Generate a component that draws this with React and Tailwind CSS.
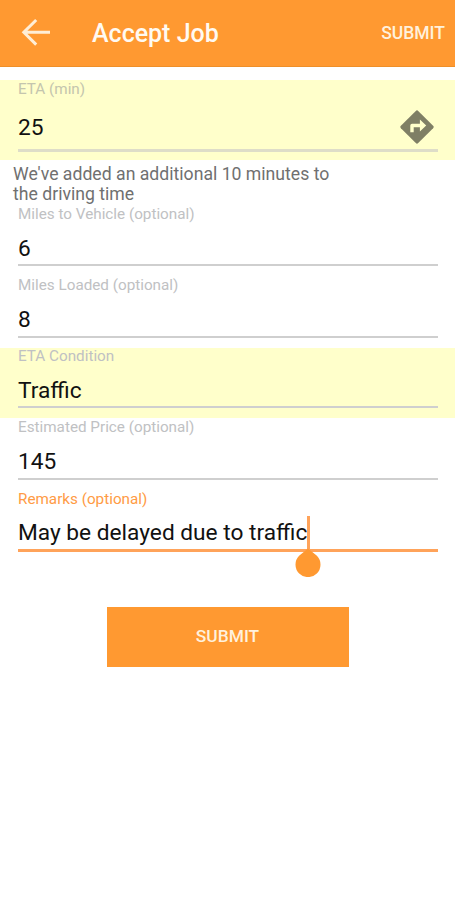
import React from "react";

const fields = [
  { label: "Miles to Vehicle (optional)", value: "6", box: "h-[71px]", title: "leading-[17px]", input: "h-[42px] pt-[9px]" },
  { label: "Miles Loaded (optional)", value: "8", box: "h-[71px]", title: "leading-[17px]", input: "h-[43px] pt-[9px]" },
  { label: "ETA Condition", value: "Traffic", box: "h-[70px] bg-[#ffffcb]", title: "leading-[17px]", input: "h-[42px] pt-[9px]" },
  { label: "Estimated Price (optional)", value: "145", box: "h-[72px]", title: "leading-[19px]", input: "h-[44px] pt-[10px]" },
];

function BackArrow() {
  return (
    <svg width="30" height="30" viewBox="0 0 30 30" fill="none" stroke="#ffeed6" strokeWidth="3">
      <path d="M15.2 2 2.8 14.3l12.4 12.3M3 14.3h26" />
    </svg>
  );
}

function DirectionsIcon() {
  return (
    <svg width="34" height="34" viewBox="0 0 34 34">
      <path d="M15.8.9a1.7 1.7 0 0 1 2.4 0l14.9 14.9a1.7 1.7 0 0 1 0 2.4L18.2 33.1a1.7 1.7 0 0 1-2.4 0L.9 18.2a1.7 1.7 0 0 1 0-2.4z" fill="#7f7f65" />
      <path d="M10.3 22.2v-6.7a1.7 1.7 0 0 1 1.7-1.7h7.9V9.4l6.3 6.1-6.3 6.1v-4.3h-6.2v4.9z" fill="#ffffcb" />
    </svg>
  );
}

function Field({ label, value, box, title, input }) {
  return (
    <div className={`pl-[18px] pr-[17px] ${box}`}>
      <p className={`h-[18px] text-[15.25px] text-[#c0c1c3] ${title}`}>{label}</p>
      <div className={`border-b-2 border-[#cfcfcf] text-[22.7px] leading-[32px] text-[#111111] ${input}`}>
        {value}
      </div>
    </div>
  );
}

export default function App() {
  return (
    <div className="h-[900px] overflow-hidden bg-white font-['Roboto',sans-serif]">
      <header className="flex h-[67px] items-center border-b border-[#ee8f29] bg-[#ff9931] pl-[21px] pr-[10px]">
        <BackArrow />
        <h1 className="ml-[41px] flex-1 pt-px text-[25px] font-medium text-[#fffaf2]">Accept Job</h1>
        <button className="text-[17.5px] font-medium text-[#fff1dd]">SUBMIT</button>
      </header>

      {/* ETA */}
      <div className="mt-[13px] h-[80px] bg-[#ffffcb] pl-[18px] pr-[17px]">
        <p className="h-[18px] text-[15.25px] leading-[18px] text-[#c4c5ae]">ETA (min)</p>
        <div className="flex h-[54px] items-center justify-between border-b-[3px] border-[#deddc8] pt-[8px] text-[22.7px] text-[#111111]">
          <span className="pt-[2px]">25</span>
          <span className="mr-[4px] pb-[2px]">
            <DirectionsIcon />
          </span>
        </div>
      </div>

      <p className="h-[46px] w-[345px] pl-[13px] pt-[4px] text-[17.65px] leading-[20px] text-[#707070]">
        We've added an additional 10 minutes to the driving time
      </p>

      {fields.map((field) => (
        <Field key={field.label} {...field} />
      ))}

      {/* Remarks, focused */}
      <div className="h-[117px] pl-[18px] pr-[17px]">
        <p className="h-[18px] text-[15.25px] leading-[18px] text-[#ff9b45]">Remarks (optional)</p>
        <div className="h-[44px] border-b-[3px] border-[#ffa35a] pt-[9px] text-[22.7px] leading-[32px] text-[#111111]">
          <span className="relative inline-block">
            May be delayed due to traffic
            <span className="absolute -right-[3px] -top-px h-[34px] w-[3px] bg-[#ffa35a]" />
            <svg className="absolute -right-[14px] top-[30px]" width="26" height="30" viewBox="0 0 26 30">
              <path d="M13 1.5 21.9 8.8a12.5 12.5 0 1 1-17.8 0z" fill="#ff9931" />
            </svg>
          </span>
        </div>
      </div>

      <button className="mx-auto block h-[60px] w-[242px] bg-[#ff9931] pb-px text-[17.4px] font-medium text-[#fff1dd]">
        SUBMIT
      </button>
    </div>
  );
}
